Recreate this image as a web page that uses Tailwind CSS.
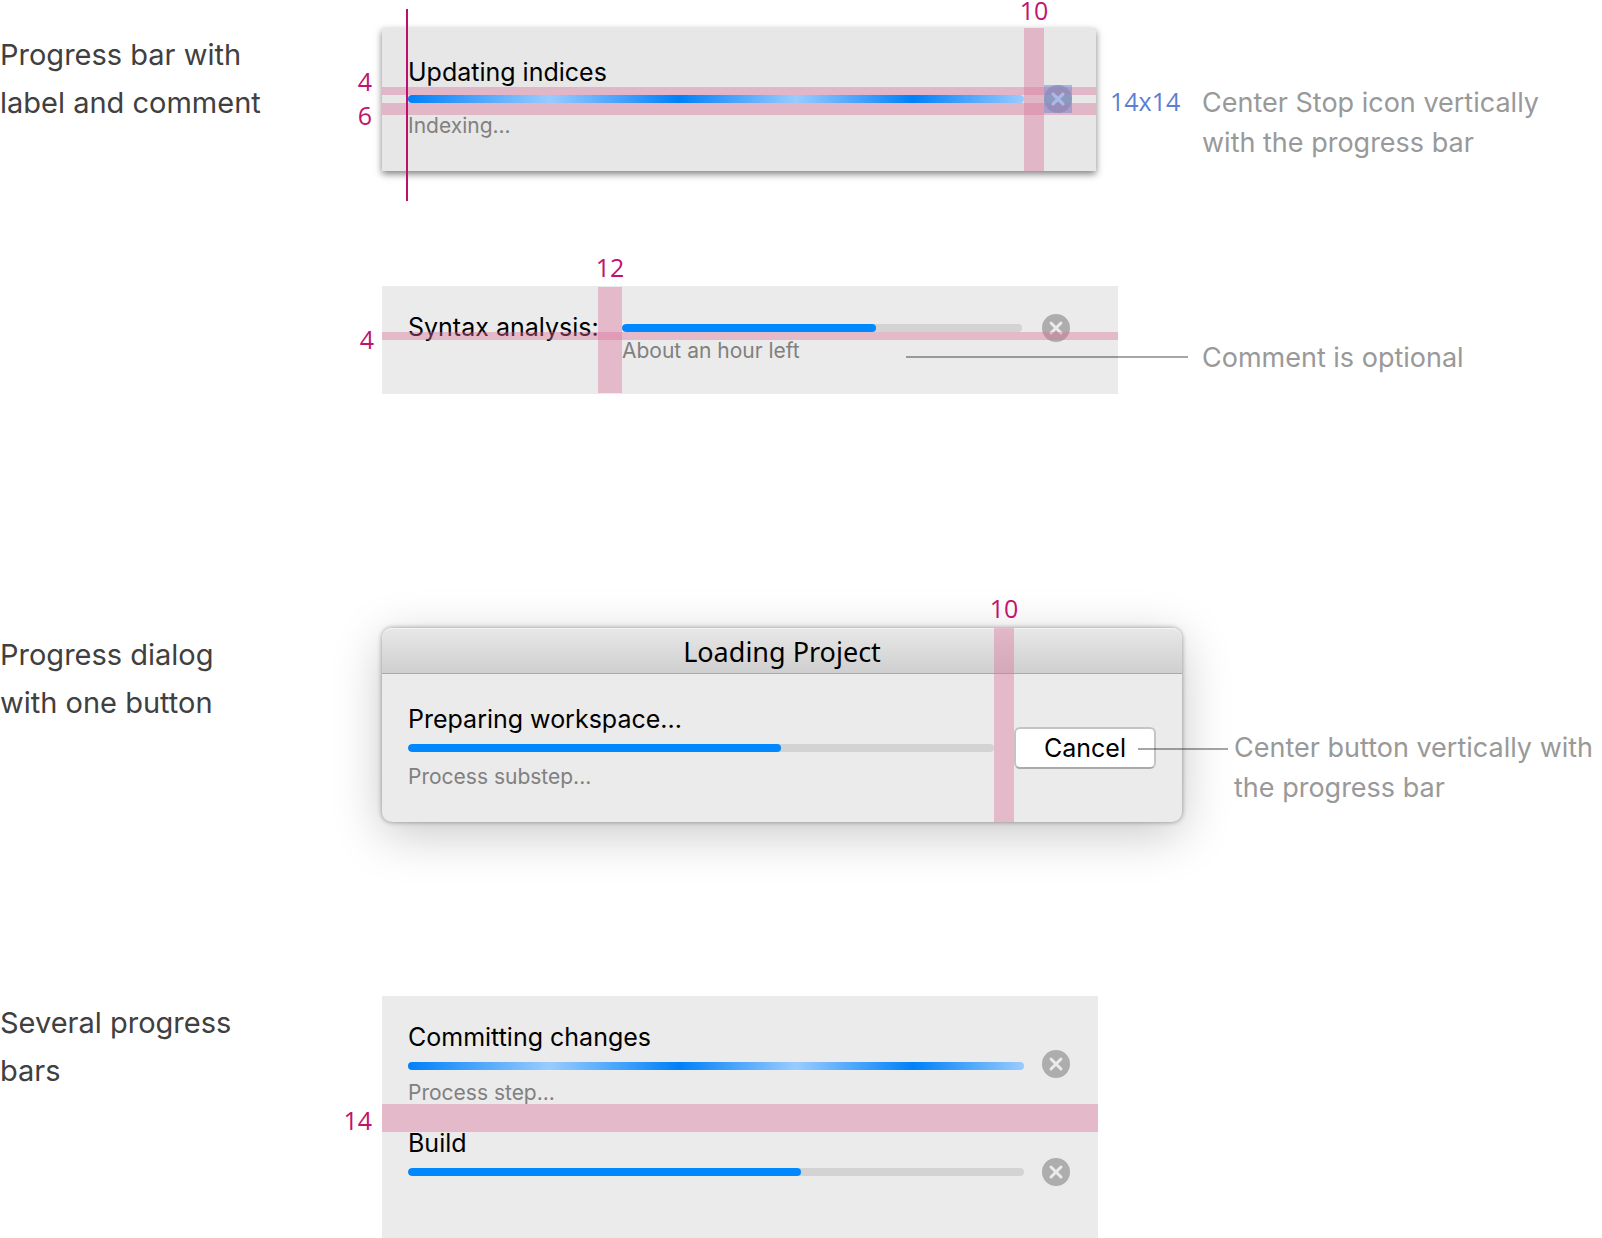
<!DOCTYPE html>
<html lang="en">
<head>
<meta charset="utf-8">
<meta name="viewport" content="width=device-width, initial-scale=1">
<title>Progress bar layout</title>
<script src="https://cdn.jsdelivr.net/npm/@tailwindcss/browser@4"></script>
</head>
<body class="bg-white font-[Inter,sans-serif] text-[25px] leading-[30px] text-black overflow-x-hidden">

<svg class="hidden" aria-hidden="true">
  <symbol id="stop" viewBox="0 0 28 28">
    <circle cx="14" cy="14" r="14" fill="#adadad"/>
    <path d="M9 9l10 10M19 9L9 19" stroke="#ebebeb" stroke-width="3" stroke-linecap="round" fill="none"/>
  </symbol>
</svg>

<main class="flex flex-col pt-7">

  <!-- Progress bar with label and comment -->
  <section class="flex items-start">
    <h2 class="w-[382px] shrink-0 pt-[3px] text-[29px] leading-[48px] text-[#404040]">Progress bar with<br>label and comment</h2>
    <div class="relative flex-1 bg-[#e7e7e7] pt-[29px] pb-[31px] pl-[26px] pr-6 shadow-[0_3px_7px_rgba(0,0,0,0.5)]">
      <label for="indices" class="block">Updating indices</label>
      <div class="mt-2 flex h-2 items-center gap-5">
        <progress id="indices" class="block h-2 min-w-0 flex-1 appearance-none rounded-full bg-[linear-gradient(90deg,#0080f8_0%,#99ccff_23%,#0080f8_44%,#99ccff_63%,#0080f8_82%,#99ccff_100%)] [&::-webkit-progress-bar]:bg-transparent"></progress>
        <button type="button" aria-label="Stop updating" class="size-7 shrink-0"><svg class="size-7"><use href="#stop"/></svg></button>
      </div>
      <p class="mt-[9px] text-[21px] leading-7 text-[#808080]">Indexing...</p>

      <!-- spacing guides -->
      <div class="absolute inset-x-0 top-[59px] h-2 bg-[#d97098]/40">
        <span class="absolute right-full bottom-[5px] mr-2.5 font-['Open_Sans',sans-serif] leading-[18px] text-[#c0136f]">4</span>
      </div>
      <div class="absolute inset-x-0 top-[75px] h-3 bg-[#d97098]/40">
        <span class="absolute right-full top-[3px] mr-2.5 font-['Open_Sans',sans-serif] leading-[18px] text-[#c0136f]">6</span>
      </div>
      <div class="absolute right-[52px] inset-y-0 flex w-5 justify-center bg-[#d97098]/40">
        <span class="absolute bottom-full mb-2 font-['Open_Sans',sans-serif] leading-5 text-[#c0136f]">10</span>
      </div>
      <div class="pointer-events-none absolute right-6 top-[57px] size-7 bg-[#6d85d1]/50">
        <svg class="size-7" viewBox="0 0 28 28" aria-hidden="true"><path d="M9 9l10 10M19 9L9 19" stroke="#abbae4" stroke-width="3" stroke-linecap="round" fill="none"/></svg>
      </div>
      <div class="absolute left-6 -top-[19px] -bottom-[30px] w-0.5 bg-[#be0f6c]"></div>
    </div>
    <div class="flex w-[506px] shrink-0 pt-[53px] leading-10">
      <span class="w-[106px] shrink-0 pl-3.5 font-['Open_Sans',sans-serif] text-[#5b7fd3]">14x14</span>
      <p class="whitespace-nowrap pt-0.5 text-[27px] text-[#999]">Center Stop icon vertically<br>with the progress bar</p>
    </div>
  </section>

  <!-- Label on the left of the bar -->
  <section class="mt-[115px] flex items-start pl-[382px]">
    <div class="relative flex-1 bg-[#ebebeb] pt-[38px] pb-[29px] pl-[26px] pr-12">
      <div class="flex h-2 items-center">
        <label for="syntax" class="w-[214px] shrink-0 whitespace-nowrap pb-0.5">Syntax analysis:</label>
        <progress id="syntax" max="400" value="254" class="block h-2 min-w-0 flex-1 appearance-none overflow-hidden rounded-full bg-[#d3d3d3] [&::-webkit-progress-bar]:bg-[#d3d3d3] [&::-webkit-progress-value]:rounded-full [&::-webkit-progress-value]:bg-[#0089ff]"></progress>
        <button type="button" aria-label="Stop analysis" class="ml-5 size-7 shrink-0"><svg class="size-7"><use href="#stop"/></svg></button>
      </div>
      <p class="mt-[5px] pl-[214px] text-[21px] leading-7 text-[#808080]">About an hour left</p>

      <div class="absolute inset-x-0 top-[46px] h-2 bg-[#d97098]/40">
        <span class="absolute right-full -top-0.5 mr-2 font-['Open_Sans',sans-serif] leading-[18px] text-[#c0136f]">4</span>
      </div>
      <div class="absolute left-[216px] inset-y-px flex w-6 justify-center bg-[#d97098]/40">
        <span class="absolute bottom-full mb-2.5 font-['Open_Sans',sans-serif] leading-5 text-[#c0136f]">12</span>
      </div>
    </div>
    <div class="w-[484px] shrink-0 pt-[52px] pl-[84px] leading-10">
      <p class="relative whitespace-nowrap text-[27px] text-[#999]">
        <span class="absolute right-full top-[18px] mr-3.5 h-0.5 w-[282px] bg-black/35"></span>
        Comment is optional
      </p>
    </div>
  </section>

  <!-- Progress dialog with one button -->
  <section class="mt-[234px] flex items-start">
    <h2 class="w-[382px] shrink-0 pt-[3px] text-[29px] leading-[48px] text-[#404040]">Progress dialog<br>with one button</h2>
    <div class="relative flex-1 rounded-[10px] bg-[#ebebeb] shadow-[0_0_5px_rgba(0,0,0,0.4),0_12px_50px_rgba(0,0,0,0.22)]">
      <h3 class="h-[46px] rounded-t-[10px] border-b border-[#aaa] bg-linear-to-b from-[#e8e8e8] to-[#cfcfcf] pt-[3px] text-center font-['Noto_Sans',sans-serif] text-[27px] leading-[42px] shadow-[inset_0_1px_0_#f4f4f4]">Loading Project</h3>
      <div class="px-[26px] pt-[30px] pb-[31px]">
        <label for="workspace" class="block">Preparing workspace...</label>
        <div class="mt-2.5 flex h-2 items-center gap-5">
          <progress id="workspace" max="586" value="373" class="block h-2 min-w-0 flex-1 appearance-none overflow-hidden rounded-full bg-[#d3d3d3] [&::-webkit-progress-bar]:bg-[#d3d3d3] [&::-webkit-progress-value]:rounded-full [&::-webkit-progress-value]:bg-[#0089ff]"></progress>
          <button type="button" class="h-[42px] w-[142px] shrink-0 rounded-md border-2 border-[#c4c4c4] border-b-[#aaa] bg-white">Cancel</button>
        </div>
        <p class="mt-[11px] text-[21px] leading-7 text-[#808080]">Process substep...</p>
      </div>

      <div class="absolute right-[168px] inset-y-0 flex w-5 justify-center bg-[#d97098]/40">
        <span class="absolute bottom-full mb-2.5 font-['Open_Sans',sans-serif] leading-5 text-[#c0136f]">10</span>
      </div>
    </div>
    <div class="w-[420px] shrink-0 pt-[100px] pl-[52px] leading-10">
      <p class="relative whitespace-nowrap text-[27px] text-[#999]">
        <span class="absolute right-full top-5 mr-1.5 h-0.5 w-[90px] bg-black/35"></span>
        Center button vertically with<br>the progress bar
      </p>
    </div>
  </section>

  <!-- Several progress bars -->
  <section class="mt-[174px] flex items-start">
    <h2 class="w-[382px] shrink-0 pt-[3px] text-[29px] leading-[48px] text-[#404040]">Several progress<br>bars</h2>
    <div class="relative flex-1 bg-[#ebebeb] pt-[26px] pb-[62px] pl-[26px] pr-7">
      <label for="commit" class="block">Committing changes</label>
      <div class="mt-2.5 flex h-2 items-center gap-[18px]">
        <progress id="commit" class="block h-2 min-w-0 flex-1 appearance-none rounded-full bg-[linear-gradient(90deg,#0080f8_0%,#99ccff_23%,#0080f8_44%,#99ccff_63%,#0080f8_82%,#99ccff_100%)] [&::-webkit-progress-bar]:bg-transparent"></progress>
        <button type="button" aria-label="Stop commit" class="-mt-1 size-7 shrink-0"><svg class="size-7"><use href="#stop"/></svg></button>
      </div>
      <p class="mt-[9px] text-[21px] leading-7 text-[#808080]">Process step...</p>
      <label for="build" class="mt-[21px] block">Build</label>
      <div class="mt-2.5 flex h-2 items-center gap-[18px]">
        <progress id="build" max="616" value="393" class="block h-2 min-w-0 flex-1 appearance-none overflow-hidden rounded-full bg-[#d3d3d3] [&::-webkit-progress-bar]:bg-[#d3d3d3] [&::-webkit-progress-value]:rounded-full [&::-webkit-progress-value]:bg-[#0089ff]"></progress>
        <button type="button" aria-label="Stop build" class="size-7 shrink-0"><svg class="size-7"><use href="#stop"/></svg></button>
      </div>

      <div class="absolute inset-x-0 top-[108px] h-7 bg-[#d97098]/40">
        <span class="absolute right-full top-[7px] mr-2.5 font-['Open_Sans',sans-serif] leading-[18px] text-[#c0136f]">14</span>
      </div>
    </div>
    <div class="w-[504px] shrink-0"></div>
  </section>

</main>
</body>
</html>
